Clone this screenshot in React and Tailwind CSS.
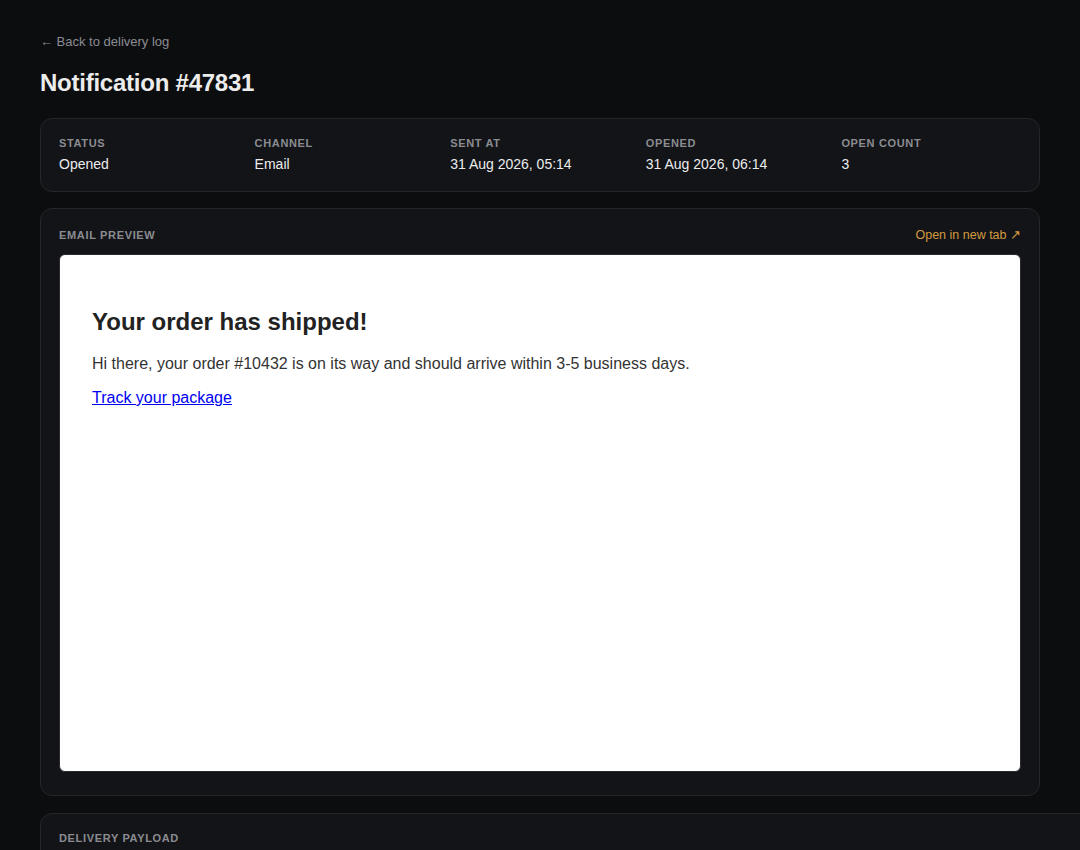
const meta = [
  { label: 'Status', value: 'Opened' },
  { label: 'Channel', value: 'Email' },
  { label: 'Sent at', value: '31 Aug 2026, 05:14' },
  { label: 'Opened', value: '31 Aug 2026, 06:14' },
  { label: 'Open count', value: '3' },
];

function Label({ children }) {
  return <p className="text-[11px] font-bold uppercase leading-4 tracking-[0.06em] text-[#8b8c91]">{children}</p>;
}

function Card({ className = '', children }) {
  return <section className={`rounded-xl border border-[#25262a] bg-[#131418] ${className}`}>{children}</section>;
}

export default function App() {
  return (
    <div className="min-h-[850px] overflow-hidden bg-[#0c0d0f] font-['Liberation_Sans',Arial,sans-serif]">
      <div className="ml-10 w-[1000px] pt-[34px]">
        <a href="#" className="block text-[13px] leading-4 text-[#8b8c91]">← Back to delivery log</a>
        <h1 className="mt-[19px] text-[24px] font-bold leading-7 tracking-[-0.01em] text-[#ececec]">Notification #47831</h1>

        <Card className="mt-[21px] px-[18px] pt-4 pb-[17px]">
          <div className="grid grid-cols-5 gap-4">
            {meta.map((item) => (
              <div key={item.label}>
                <Label>{item.label}</Label>
                <p className="mt-[3px] text-sm leading-5 text-[#ececec]">{item.value}</p>
              </div>
            ))}
          </div>
        </Card>

        <Card className="mt-4 px-[18px] pt-[18px] pb-[23px]">
          <div className="flex items-center justify-between">
            <Label>Email preview</Label>
            <a href="#" className="text-[12.5px] leading-4 text-[#d49a3f]">Open in new tab ↗</a>
          </div>
          <div className="mt-[11px] h-[518px] rounded-md border border-[#2a2b30] bg-white px-8 pt-[53px]">
            <h2 className="text-[24px] font-bold leading-7 text-[#222222]">Your order has shipped!</h2>
            <p className="mt-4 text-base leading-6 text-[#333333]">Hi there, your order #10432 is on its way and should arrive within 3-5 business days.</p>
            <a href="#" className="mt-[10px] block w-max text-base leading-6 text-[#0000ee] underline">Track your package</a>
          </div>
        </Card>

        <Card className="mt-[17px] w-[1100px] px-[18px] pt-4 pb-10">
          <Label>Delivery payload</Label>
        </Card>
      </div>
    </div>
  );
}
